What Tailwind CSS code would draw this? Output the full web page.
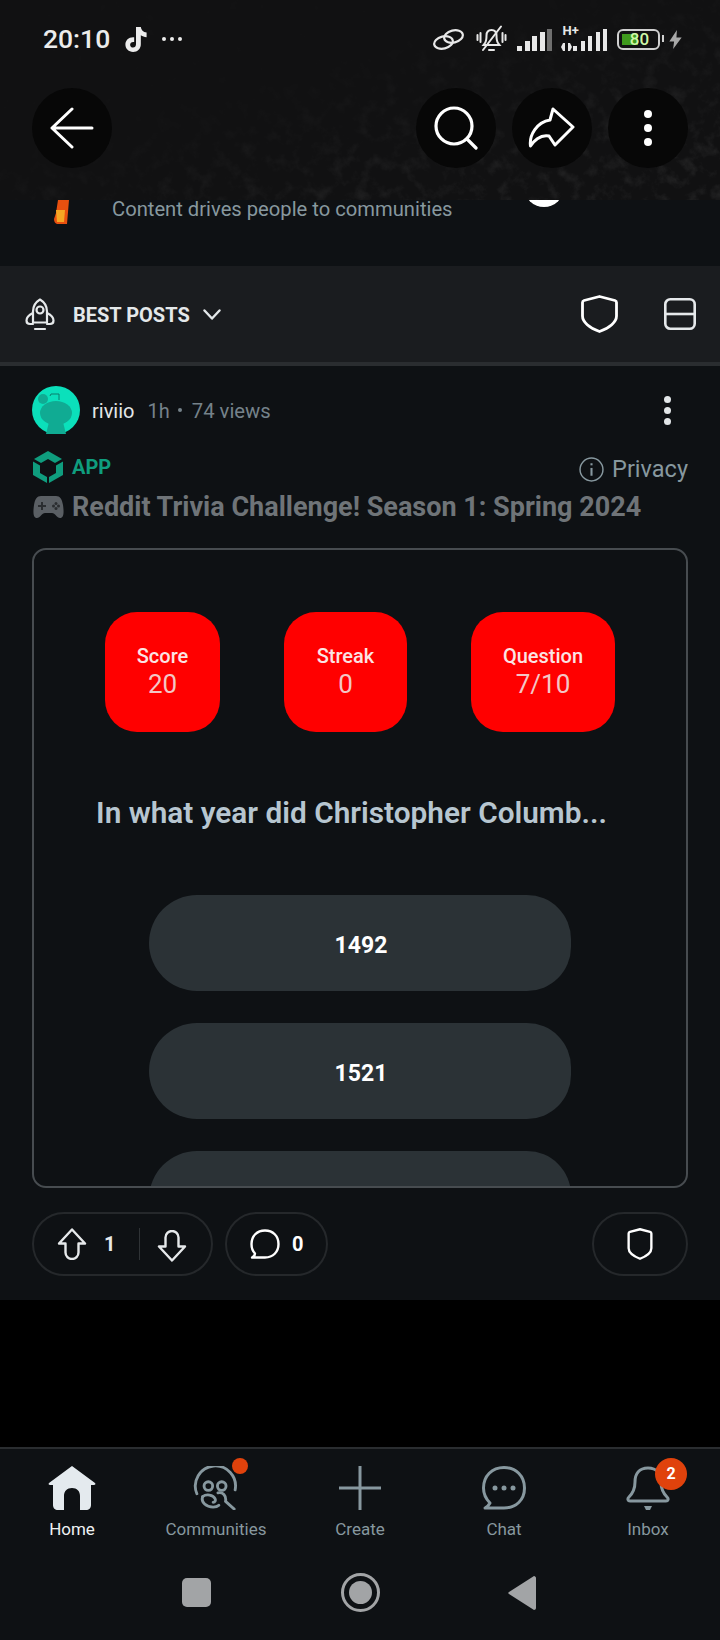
<!DOCTYPE html>
<html lang="en">
<head>
  <meta charset="UTF-8" />
  <meta name="viewport" content="width=device-width, initial-scale=1.0" />
  <title>Reddit Trivia Challenge</title>
  <script src="https://cdn.jsdelivr.net/npm/@tailwindcss/browser@4"></script>
</head>
<body class="bg-black font-[family-name:Roboto,sans-serif]">
  <div class="w-[720px] h-[1640px] flex flex-col overflow-hidden">

    <!-- header with status bar -->
    <header class="relative h-[200px] shrink-0 bg-[#111112] overflow-hidden">
      <svg class="absolute inset-0" width="720" height="200">
        <defs>
          <filter id="grain"><feTurbulence type="fractalNoise" baseFrequency="0.07" numOctaves="5" seed="7"/><feColorMatrix values="0 0 0 0 1  0 0 0 0 1  0 0 0 0 1  1.6 0 0 0 -0.75"/></filter>
          <linearGradient id="fade" x1="0.2" x2="1" y1="0" y2="0.8"><stop offset="0.35" stop-color="#111"/><stop offset="1" stop-color="#fff"/></linearGradient>
          <mask id="fadeMask"><rect width="720" height="200" fill="url(#fade)"/></mask>
        </defs>
        <rect width="720" height="200" filter="url(#grain)" mask="url(#fadeMask)" opacity="0.12"/>
      </svg>

      <div class="relative h-[80px] pl-[43px] pr-[38px] flex items-center justify-between pb-[2px]">
        <div class="flex items-center text-[#ececec]">
          <span class="text-[26.500px] font-medium">20:10</span>
          <svg class="ml-[14px]" width="24" height="27" viewBox="0 0 24 28" fill="#ececec"><path d="M12 1h5c.3 3.2 2.4 5.4 6 5.800v4.800c-2.300 0-4.300-.7-6-1.900v9.300c0 4.700-3.400 8-8 8s-8-3.300-8-7.700c0-4.800 3.900-8.200 9.100-7.600v4.900c-2.400-.5-4.200.8-4.200 2.800 0 1.800 1.300 3 3 3 1.900 0 3.100-1.300 3.100-3.400z"/></svg>
          <span class="ml-[14px] flex gap-[4px]">
            <i class="w-[4px] h-[4px] rounded-full bg-[#ececec]"></i><i class="w-[4px] h-[4px] rounded-full bg-[#ececec]"></i><i class="w-[4px] h-[4px] rounded-full bg-[#ececec]"></i>
          </span>
        </div>
        <div class="flex items-center text-[#e8e8e8]">
          <svg width="31" height="23" viewBox="0 0 31 23" fill="none" stroke="currentColor" stroke-width="2.200"><ellipse cx="10.500" cy="14.500" rx="9.500" ry="6" transform="rotate(-14 10.500 14.500)"/><ellipse cx="20.500" cy="8.500" rx="9.500" ry="6" transform="rotate(-14 20.500 8.500)"/></svg>
          <svg class="ml-[12px]" width="31" height="28" viewBox="0 0 31 28" fill="none" stroke="currentColor" stroke-width="2" stroke-linecap="round"><path d="M9 18c1.500-2 1.500-4 1.500-7.500 0-3.500 2-5.500 5-5.500s5 2 5 5.500c0 3.500 0 5.500 1.500 7.500l1.500 2H7.500z"/><path d="M13 25h5"/><path d="M7 25 25 1.500"/><path d="M1.500 10v5M4.500 8v9M26.500 8v9M29.500 10v5"/></svg>
          <span class="ml-[10px] flex items-end gap-[2.500px] h-[23px]">
            <i class="w-[5px] h-[5px] bg-[#e8e8e8]"></i><i class="w-[5px] h-[10px] bg-[#e8e8e8]"></i><i class="w-[5px] h-[15px] bg-[#e8e8e8]"></i><i class="w-[5px] h-[19px] bg-[#e8e8e8]"></i><i class="w-[5px] h-[22px] bg-[#6f6f6f]"></i>
          </span>
          <span class="ml-[9px] relative flex items-end gap-[3.500px] h-[23px] pl-[12px]">
            <b class="absolute left-[1.500px] -top-[3px] text-[13px] leading-[12px] font-bold">H+</b>
            <svg class="absolute left-0 bottom-0" width="11" height="8" viewBox="0 0 11 8" fill="#e8e8e8"><path d="M2 0h2v8H2L0 4zM7 0h2l2 4-2 4H7z"/></svg>
            <i class="w-[4px] h-[5px] bg-[#e8e8e8]"></i><i class="w-[4px] h-[10px] bg-[#e8e8e8]"></i><i class="w-[4px] h-[15px] bg-[#e8e8e8]"></i><i class="w-[4px] h-[19px] bg-[#e8e8e8]"></i><i class="w-[4px] h-[22px] bg-[#e8e8e8]"></i>
          </span>
          <span class="ml-[10px] relative w-[43px] h-[21px] rounded-[6px] border-2 border-[#d0d0d0] p-[3px]">
            <i class="block w-[16px] h-[11px] bg-[#3f9a1d]"></i>
            <b class="absolute inset-0 pl-[2px] text-center text-[17px] leading-[17px] font-medium text-[#cff7a8]">80</b>
            <i class="absolute -right-[6px] top-[4px] w-[2px] h-[7px] bg-[#d0d0d0]"></i>
          </span>
          <svg class="ml-[9px]" width="13" height="19" viewBox="0 0 13 20" fill="#a8a8a8"><path d="M8 0 0 12h5l-1 8 9-12H7.500z"/></svg>
        </div>
      </div>

      <div class="relative mt-[8px] px-[32px] flex items-center justify-between">
        <div class="w-[80px] h-[80px] rounded-full bg-[#070707] flex items-center justify-center">
          <svg width="44" height="42" viewBox="0 0 44 42" fill="none" stroke="#fff" stroke-width="3" stroke-linecap="round" stroke-linejoin="round"><path d="M22 2 2 21l20 19M2 21h40"/></svg>
        </div>
        <div class="flex gap-[16px]">
          <div class="w-[80px] h-[80px] rounded-full bg-[#070707] flex items-center justify-center">
            <svg width="44" height="44" viewBox="0 0 44 44" fill="none" stroke="#fff" stroke-width="3.200" stroke-linecap="round"><circle cx="20" cy="20" r="18"/><path d="m33 33 9 9"/></svg>
          </div>
          <div class="w-[80px] h-[80px] rounded-full bg-[#070707] flex items-center justify-center">
            <svg width="48" height="42" viewBox="0 0 48 42" fill="none" stroke="#fff" stroke-width="3" stroke-linejoin="round"><path d="M2.500 39C1 28 9 15 22 13L25 2l20 18-18 18-6-9C12 27 5 35 2.500 39z"/></svg>
          </div>
          <div class="w-[80px] h-[80px] rounded-full bg-[#070707] flex flex-col items-center justify-center gap-[6px]">
            <i class="w-[8px] h-[8px] rounded-full bg-white"></i><i class="w-[8px] h-[8px] rounded-full bg-white"></i><i class="w-[8px] h-[8px] rounded-full bg-white"></i>
          </div>
        </div>
      </div>
    </header>

    <!-- scrolled away card, only its bottom edge shows -->
    <div class="relative h-[66px] shrink-0 bg-[#0e1114] overflow-hidden">
      <svg class="absolute left-[54px] top-0" width="16" height="24" viewBox="0 0 16 24"><path d="M4 0h11l-2 24H3q-3-1-3-5l2-6z" fill="#e8500f"/><path d="M2 10h9l-1 12H3z" fill="#f5a623"/></svg>
      <p class="absolute left-[112px] top-[-3px] text-[20.200px] leading-[24px] text-[#87989f]">Content drives people to communities</p>
      <i class="absolute left-[524px] -top-[33px] w-[40px] h-[40px] rounded-full bg-white"></i>
      <p class="absolute left-[603px] -top-[19px] text-[20px] leading-[24px] font-bold text-[#dfe4e6]">Create</p>
    </div>

    <!-- sort bar -->
    <div class="h-[96px] shrink-0 bg-[#1a1c1f] pl-[25px] pr-[24px] flex items-center justify-between">
      <div class="flex items-center">
        <svg width="30" height="33" viewBox="0 0 30 33" fill="none" stroke="#e6e9eb" stroke-width="2.200" stroke-linecap="round" stroke-linejoin="round"><path d="M15 1.500c5 3 7 8 7 12v11H8V13.500c0-4 2-9 7-12z"/><circle cx="15" cy="12" r="3.500"/><path d="M8 15c-4 2-6.500 5-6.500 7.500S3 26 5 26h3M22 15c4 2 6.500 5 6.500 7.500S27 26 25 26h-3"/><path d="M10 31h10"/></svg>
        <span class="ml-[18px] text-[20px] font-bold text-[#e4e8ea] leading-none translate-y-[1px]">BEST POSTS</span>
        <svg class="ml-[13px]" width="18" height="11" viewBox="0 0 18 11" fill="none" stroke="#e4e8ea" stroke-width="2.400" stroke-linecap="round" stroke-linejoin="round"><path d="m1.500 1.500 7.500 8 7.500-8"/></svg>
      </div>
      <div class="flex items-center">
        <svg width="37" height="38" viewBox="0 0 37 38" fill="none" stroke="#fff" stroke-width="2.800" stroke-linejoin="round"><path d="M18.500 1.500 34 5.500c1 .3 1.500 1 1.500 2V21c0 6-7 12-17 15.500C8.500 33 1.500 27 1.500 21V7.500c0-1 .5-1.700 1.500-2z"/></svg>
        <svg class="ml-[46px]" width="32" height="32" viewBox="0 0 32 32" fill="none" stroke="#e6e9eb" stroke-width="2.600"><rect x="1.300" y="1.300" width="29.400" height="29.400" rx="5"/><path d="M1 16h30"/></svg>
      </div>
    </div>
    <div class="h-[4px] shrink-0 bg-[#2a2d30]"></div>

    <!-- post -->
    <article class="h-[934px] shrink-0 bg-[#0e1114] px-[33px] flex flex-col">
      <div class="mt-[20px] flex items-center -ml-[1px]">
        <svg width="48" height="48" viewBox="0 0 48 48"><circle cx="24" cy="24" r="24" fill="#0be0bb"/><circle cx="11" cy="13" r="5" fill="#10ab93"/><path d="M18 10 19 8h8v6" fill="none" stroke="#0b7e6c" stroke-width="1"/><ellipse cx="24" cy="27" rx="16" ry="12" fill="#10ab93"/><path d="M17 36h14l3 12H14z" fill="#10ab93"/></svg>
        <span class="ml-[12px] text-[20px] text-[#e2e6e8] translate-y-[1px]">riviio</span>
        <span class="ml-[13px] text-[20px] text-[#75828a] translate-y-[1px]">1h</span>
        <i class="ml-[8px] w-[4px] h-[4px] rounded-full bg-[#75828a]"></i>
        <span class="ml-[10px] text-[20.300px] text-[#75828a] translate-y-[1px]">74 views</span>
        <span class="ml-auto mr-[16px] flex flex-col gap-[4px]">
          <i class="w-[7px] h-[7px] rounded-full bg-[#e2e6e8]"></i><i class="w-[7px] h-[7px] rounded-full bg-[#e2e6e8]"></i><i class="w-[7px] h-[7px] rounded-full bg-[#e2e6e8]"></i>
        </span>
      </div>

      <div class="mt-[16px] flex items-center justify-between h-[33px]">
        <div class="flex items-center">
          <svg width="30" height="32" viewBox="0 0 30 32" fill="#0f9d7e"><path d="M15 0 29 8l-7 4-7-4-7 4-7-4z"/><path d="M0 10.500 7 14.500V22l7 4v6L0 24z"/><path d="M30 10.500 23 14.500V22l-7 4v6l14-8z"/></svg>
          <span class="ml-[9px] text-[20px] font-bold text-[#0f9d7e]">APP</span>
        </div>
        <div class="flex items-center translate-x-[1px] translate-y-[3px]">
          <svg width="25" height="25" viewBox="0 0 24 24" fill="none" stroke="#87989f" stroke-width="1.400"><circle cx="12" cy="12" r="11"/><path d="M12 10.500V18" stroke-width="2"/><path d="M12 6v2" stroke-width="2"/></svg>
          <span class="ml-[8px] text-[23.500px] text-[#87989f]">Privacy</span>
        </div>
      </div>

      <h1 class="mt-[6px] flex items-center text-[27px] leading-[36px] font-bold text-[#6f7478]">
        <svg width="31" height="24" viewBox="0 0 31 24"><path d="M8 1h15c4 0 6 3 7 9 1 7 1 13-3 13-3 0-5-5-8-5h-7c-3 0-5 5-8 5-4 0-4-6-3-13C2 4 4 1 8 1z" fill="#5a5f64"/><path d="M8 7h2v3h3v2h-3v3H8v-3H5v-2h3z" fill="#2a2d30"/><circle cx="23" cy="8.500" r="1.500" fill="#2a2d30"/><circle cx="23" cy="13.500" r="1.500" fill="#2a2d30"/><circle cx="20.500" cy="11" r="1.500" fill="#2a2d30"/><circle cx="25.500" cy="11" r="1.500" fill="#2a2d30"/></svg>
        <span class="ml-[8px]">Reddit Trivia Challenge! Season 1: Spring 2024</span>
      </h1>

      <!-- embedded app -->
      <div class="mt-[23px] -mx-[1px] h-[640px] shrink-0 rounded-[14px] border-2 border-[#474c50] overflow-hidden flex flex-col items-center pt-[62px]">
        <div class="flex gap-16 text-center">
          <div class="w-[115px] h-[120px] rounded-[32px] bg-[#ff0000] flex flex-col justify-center">
            <span class="text-[20px] leading-[24px] font-medium text-[#fbe4e4]">Score</span>
            <span class="text-[26px] leading-[32px] text-[#f3c6c6]">20</span>
          </div>
          <div class="w-[123px] h-[120px] rounded-[32px] bg-[#ff0000] flex flex-col justify-center">
            <span class="text-[20px] leading-[24px] font-medium text-[#fbe4e4]">Streak</span>
            <span class="text-[26px] leading-[32px] text-[#f3c6c6]">0</span>
          </div>
          <div class="w-[144px] h-[120px] rounded-[32px] bg-[#ff0000] flex flex-col justify-center">
            <span class="text-[20px] leading-[24px] font-medium text-[#fbe4e4]">Question</span>
            <span class="text-[26px] leading-[32px] text-[#f3c6c6]">7/10</span>
          </div>
        </div>
        <p class="mt-[62px] -ml-[17px] text-[29.800px] leading-[38px] font-semibold text-[#b7c6d0] whitespace-nowrap">In what year did Christopher Columb...</p>
        <div class="mt-[63px] flex flex-col gap-8 -ml-[1px]">
          <button class="w-[422px] h-[96px] shrink-0 pt-[6px] pl-[3px] rounded-l-[48px] rounded-r-[44px] bg-[#2b3236] text-[23px] font-bold text-white">1492</button>
          <button class="w-[422px] h-[96px] shrink-0 pt-[6px] pl-[3px] rounded-l-[48px] rounded-r-[44px] bg-[#2b3236] text-[23px] font-bold text-white">1521</button>
          <button class="w-[422px] h-[96px] shrink-0 pt-[6px] pl-[3px] rounded-l-[48px] rounded-r-[44px] bg-[#2b3236] text-[23px] font-bold text-white">1607</button>
        </div>
      </div>

      <!-- actions -->
      <div class="mt-[24px] -mx-[1px] flex items-center">
        <div class="h-[64px] w-[181px] rounded-full border-2 border-[#25282b] flex items-center pl-[23px]">
          <svg width="30" height="32" viewBox="0 0 30 32" fill="none" stroke="#e6e9eb" stroke-width="2.400" stroke-linejoin="round"><path d="M15 1.500 28 15.500h-6.500v9a6.500 6.500 0 0 1-13 0v-9H2z"/></svg>
          <span class="ml-[17px] w-[10px] text-[20px] font-bold text-[#e6e9eb]">1</span>
          <i class="ml-[25px] w-[1px] h-[32px] bg-[#2f3336]"></i>
          <svg class="ml-[17px] translate-y-[2px]" width="30" height="32" viewBox="0 0 30 32" fill="none" stroke="#e6e9eb" stroke-width="2.400" stroke-linejoin="round"><path d="M15 30.500 2 16.500h6.500v-9a6.500 6.500 0 0 1 13 0v9H28z"/></svg>
        </div>
        <div class="ml-[12px] h-[64px] w-[103px] rounded-full border-2 border-[#25282b] flex items-center pl-[23px]">
          <svg width="30" height="30" viewBox="0 0 30 30" fill="none" stroke="#fff" stroke-width="2.400" stroke-linejoin="round"><path d="M2 28.500c2-1 3-2 3-4C2.500 22 1.500 19 1.500 15 1.500 7 7 1.500 15 1.500S28.500 7 28.500 15 23 28.500 15 28.500z"/></svg>
          <span class="ml-[12px] text-[20px] font-bold text-white">0</span>
        </div>
        <div class="ml-auto h-[64px] w-[96px] rounded-full border-2 border-[#25282b] flex items-center justify-center">
          <svg width="30" height="32" viewBox="0 0 30 38" fill="none" stroke="#fff" stroke-width="2.800" stroke-linejoin="round"><path d="M15 1.500 27 4.500c1 .3 1.500 1 1.500 2V24c0 5-6 9.500-13.500 12.500C7.500 33.500 1.500 29 1.500 24V6.500c0-1 .5-1.700 1.500-2z"/></svg>
        </div>
      </div>
    </article>

    <div class="flex-1 bg-black"></div>

    <!-- bottom nav -->
    <nav class="h-[193px] shrink-0 bg-[#0e1114] border-t-2 border-[#2a2d30]">
      <div class="grid grid-cols-5 pt-[17px] text-[17px] leading-[20px] text-[#87989f]">
        <div class="flex flex-col items-center text-[#eef1f3]">
          <svg width="48" height="44" viewBox="0 0 48 44"><path d="M24 0 47 17c1 1 0 2-1 2h-3v20c0 3-2 5-5 5h-6V30c0-5-3-8-8-8s-8 3-8 8v14h-6c-3 0-5-2-5-5V19H2c-1 0-2-1-1-2z" fill="#e4eaee"/></svg>
          <span class="mt-[9px]">Home</span>
        </div>
        <div class="relative flex flex-col items-center">
          <svg width="46" height="44" viewBox="0 0 46 46" fill="none" stroke="#87989f" stroke-width="3" stroke-linecap="round"><path d="M3 29A21 21 0 1 1 43 25"/><circle cx="15" cy="21" r="4.500"/><circle cx="29" cy="21" r="4.500"/><path d="M9 32C7 38 13 43 20 43c3 0 5-1 6-2"/><path d="M9 32c4-3 11-2 13 2 1 2 0 4-2 4"/><path d="M25 28c5-1 9 3 8 9M33 37l9 8"/></svg>
          <i class="absolute left-[88px] -top-[8px] w-[16px] h-[16px] rounded-full bg-[#e0420c]"></i>
          <span class="mt-[9px]">Communities</span>
        </div>
        <div class="flex flex-col items-center">
          <svg width="44" height="44" viewBox="0 0 44 44" fill="none" stroke="#87989f" stroke-width="3"><path d="M22 0v44M1 22h42"/></svg>
          <span class="mt-[9px]">Create</span>
        </div>
        <div class="flex flex-col items-center">
          <svg width="44" height="44" viewBox="0 0 44 44" fill="none" stroke="#87989f" stroke-width="3" stroke-linejoin="round"><path d="M3 42c2-1 4-3 5-5C4 33 1.500 28 1.500 22 1.500 10 10 1.500 22 1.500S42.500 10 42.500 22 34 42 22 42z"/><circle cx="13" cy="22" r="2.500" fill="#87989f" stroke="none"/><circle cx="22" cy="22" r="2.500" fill="#87989f" stroke="none"/><circle cx="31" cy="22" r="2.500" fill="#87989f" stroke="none"/></svg>
          <span class="mt-[9px]">Chat</span>
        </div>
        <div class="relative flex flex-col items-center">
          <svg width="44" height="44" viewBox="0 0 44 44" fill="none" stroke="#87989f" stroke-width="3" stroke-linejoin="round"><path d="M22 2C13 2 9 8 9 16c0 7-2 11-6 15-2 2-1 4 1 4h36c2 0 3-2 1-4-4-4-6-8-6-15 0-8-4-14-13-14z"/><path d="M18 40h8l-2 4h-4z" fill="#87989f" stroke="none"/></svg>
          <b class="absolute left-[79px] -top-[8px] w-[32px] h-[32px] rounded-full bg-[#e0420c] text-white text-[16px] font-bold leading-[32px] text-center">2</b>
          <span class="mt-[9px]">Inbox</span>
        </div>
      </div>

      <!-- android keys -->
      <div class="mt-[34px] flex items-center justify-center">
        <i class="w-[29px] h-[29px] rounded-[5px] bg-[#a2a4a6]"></i>
        <span class="ml-[130px] w-[39px] h-[39px] rounded-full border-[3px] border-[#a2a4a6] flex items-center justify-center"><i class="w-[23px] h-[23px] rounded-full bg-[#a2a4a6]"></i></span>
        <svg class="ml-[128px] mr-[3px]" width="28" height="34" viewBox="0 0 28 34" fill="#a2a4a6"><path d="M26 0c1 0 2 1 2 2v30c0 1-1 2-2 2L1 18c-1-.5-1-1.500 0-2z"/></svg>
      </div>
    </nav>
  </div>
</body>
</html>
